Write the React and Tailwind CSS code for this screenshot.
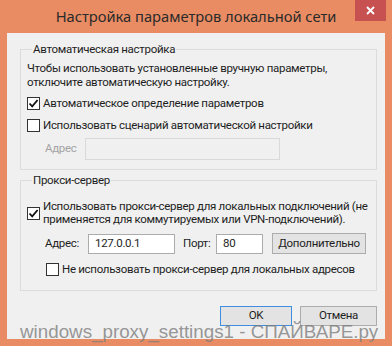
const ui = { fontFamily: 'Roboto, "Noto Sans", "Liberation Sans", sans-serif' };
const titleFont = { fontFamily: '"Noto Sans", "Liberation Sans", sans-serif' };

function Check({ checked }) {
  return (
    <span className="flex h-[13px] w-[13px] shrink-0 items-center justify-center border border-[#333333] bg-white">
      {checked && (
        <svg width="11" height="11" viewBox="0 0 11 11">
          <path d="M1.5 5.5 L4.2 8.3 L9.6 2" fill="none" stroke="#111" strokeWidth="1.8" />
        </svg>
      )}
    </span>
  );
}

function Group({ title, className, children }) {
  return (
    <fieldset className={"mr-[8px] ml-[13px] min-w-0 border border-[#DCDCDC] px-[6px] " + className}>
      <legend className="ml-[5px] px-[1px] leading-[15px] text-[#1e1e1e]">{title}</legend>
      {children}
    </fieldset>
  );
}

function Button({ children, focused, className }) {
  return (
    <button
      type="button"
      className={
        "flex h-[20px] items-center justify-center border bg-[#E3E3E3] text-[#1e1e1e] " +
        (focused ? "border-[#3D8EE0] " : "border-[#ACACAC] ") +
        className
      }
    >
      {children}
    </button>
  );
}

export default function App() {
  return (
    <div
      className="relative flex h-[346px] w-[392px] flex-col overflow-hidden whitespace-nowrap bg-[#E98C63] text-[11.5px] tracking-[-0.3px]"
      style={ui}
    >
      <div className="relative flex h-[33px] items-start justify-center">
        <span className="mt-[6px] text-[14.7px] leading-[20px] tracking-normal text-[#2a2a2a]" style={titleFont}>
          Настройка параметров локальной сети
        </span>
        <span className="absolute top-0 right-[6px] flex h-[21px] w-[31px] items-center justify-center bg-[#C75050]">
          <svg width="9" height="9" viewBox="0 0 9 9">
            <path d="M1 1 L8 8 M8 1 L1 8" stroke="#fff" strokeWidth="1.8" />
          </svg>
        </span>
      </div>

      <div className="mx-[7px] flex h-[306px] flex-col bg-[#F0F0F0] pt-[9px]">
        <Group title="Автоматическая настройка" className="h-[128px]">
          <p className="mt-[4px] leading-[14px] text-[#1e1e1e]">
            Чтобы использовать установленные вручную параметры,
            <br />
            отключите автоматическую настройку.
          </p>
          <label className="mt-[7px] flex items-center gap-[3px] leading-[14px] text-[#1e1e1e]">
            <Check checked />
            Автоматическое определение параметров
          </label>
          <label className="mt-[8px] flex items-center gap-[3px] leading-[14px] text-[#1e1e1e]">
            <Check />
            Использовать сценарий автоматической настройки
          </label>
          <div className="mt-[6px] flex items-center">
            <span className="ml-[18px] w-[40px] text-[#A3A3A3]">Адрес</span>
            <span className="h-[22px] w-[195px] border border-[#D9D9D9] bg-[#F0F0F0]" />
          </div>
        </Group>

        <Group title="Прокси-сервер" className="mt-[3px] h-[118px]">
          <label className="mt-[12px] flex items-center gap-[3px] text-[#1e1e1e]">
            <Check checked />
            <span className="leading-[13px]">
              Использовать прокси-сервер для локальных подключений (не
              <br />
              применяется для коммутируемых или VPN-подключений).
            </span>
          </label>
          <div className="mt-[7px] flex items-center text-[#1e1e1e]">
            <span className="ml-[18px] w-[43px]">Адрес:</span>
            <span className="flex h-[20px] w-[87px] items-center border border-[#ACACAC] bg-white pl-[6px]">127.0.0.1</span>
            <span className="ml-[8px] w-[33px]">Порт:</span>
            <span className="flex h-[20px] w-[47px] items-center border border-[#ACACAC] bg-white pl-[6px]">80</span>
            <Button className="ml-[9px] h-[21px] w-[94px]">Дополнительно</Button>
          </div>
          <label className="mt-[8px] ml-[19px] flex items-center gap-[3px] leading-[14px] text-[#1e1e1e]">
            <Check />
            Не использовать прокси-сервер для локальных адресов
          </label>
        </Group>

        <div className="mt-[15px] mr-[8px] flex justify-end gap-[8px]">
          <Button focused className="w-[72px]">OK</Button>
          <Button className="w-[77px]">Отмена</Button>
        </div>
      </div>

      <span
        className="pointer-events-none absolute bottom-[3px] left-[20px] text-[18.8px] leading-[22px] tracking-normal text-[#7d7d7d]/80"
        style={{ fontFamily: '"Liberation Sans", Arial, sans-serif' }}
      >
        windows_proxy_settings1 - СПАЙВАРЕ.ру
      </span>
    </div>
  );
}
